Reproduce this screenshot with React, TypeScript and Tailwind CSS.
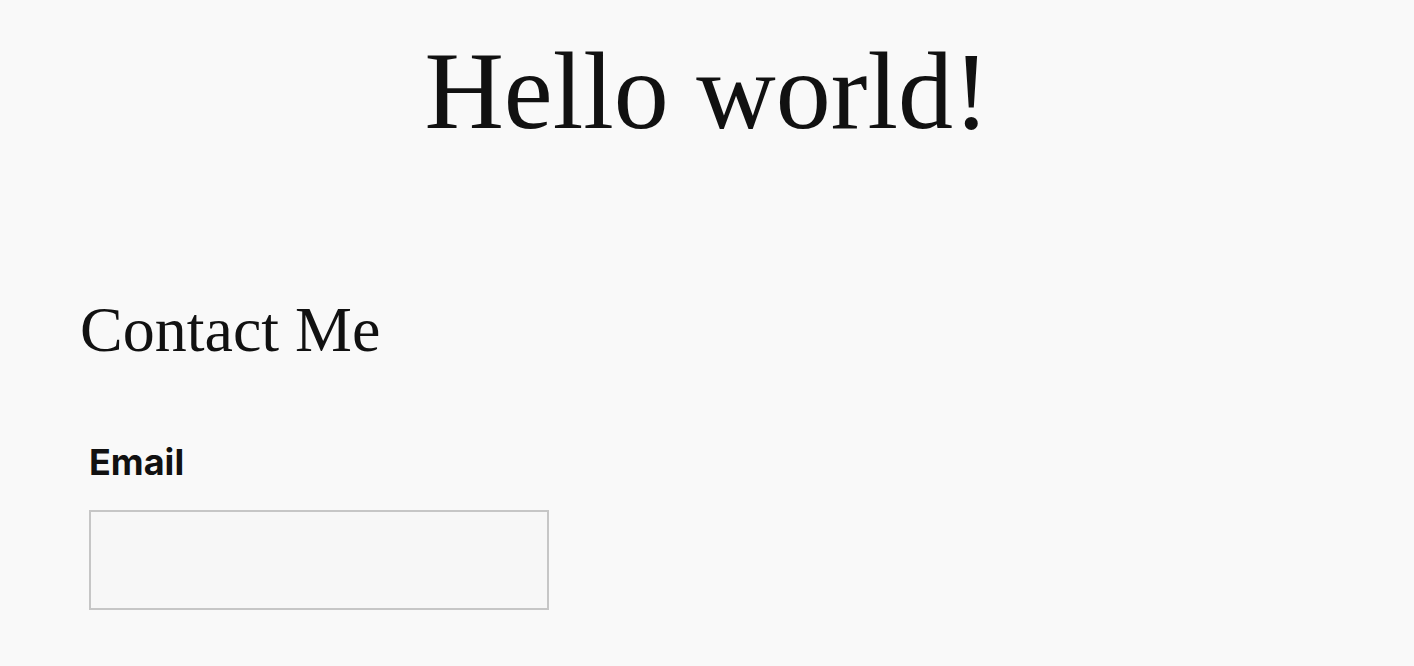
export default function App() {
  return (
    <div className="min-h-screen bg-[#f9f9f9] text-[#111111]">
      <h1 className="pt-[26px] text-center text-[110px] leading-[130px] font-normal [font-family:'Liberation_Serif',serif]">
        Hello world!
      </h1>
      <section className="px-[80px] pt-[138px]">
        <h2 className="text-[64px] leading-[72px] font-normal [font-family:'Liberation_Serif',serif]">
          Contact Me
        </h2>
        <form className="mt-[76px] pl-[9px]">
          <label
            htmlFor="email"
            className="block text-[36px] leading-[40px] font-bold [font-family:Inter,sans-serif]"
          >
            Email
          </label>
          <input
            id="email"
            type="email"
            className="mt-[28px] block h-[100px] w-[460px] border-2 border-[#c6c6c6] bg-[#f7f7f7] outline-none"
          />
        </form>
      </section>
    </div>
  )
}
